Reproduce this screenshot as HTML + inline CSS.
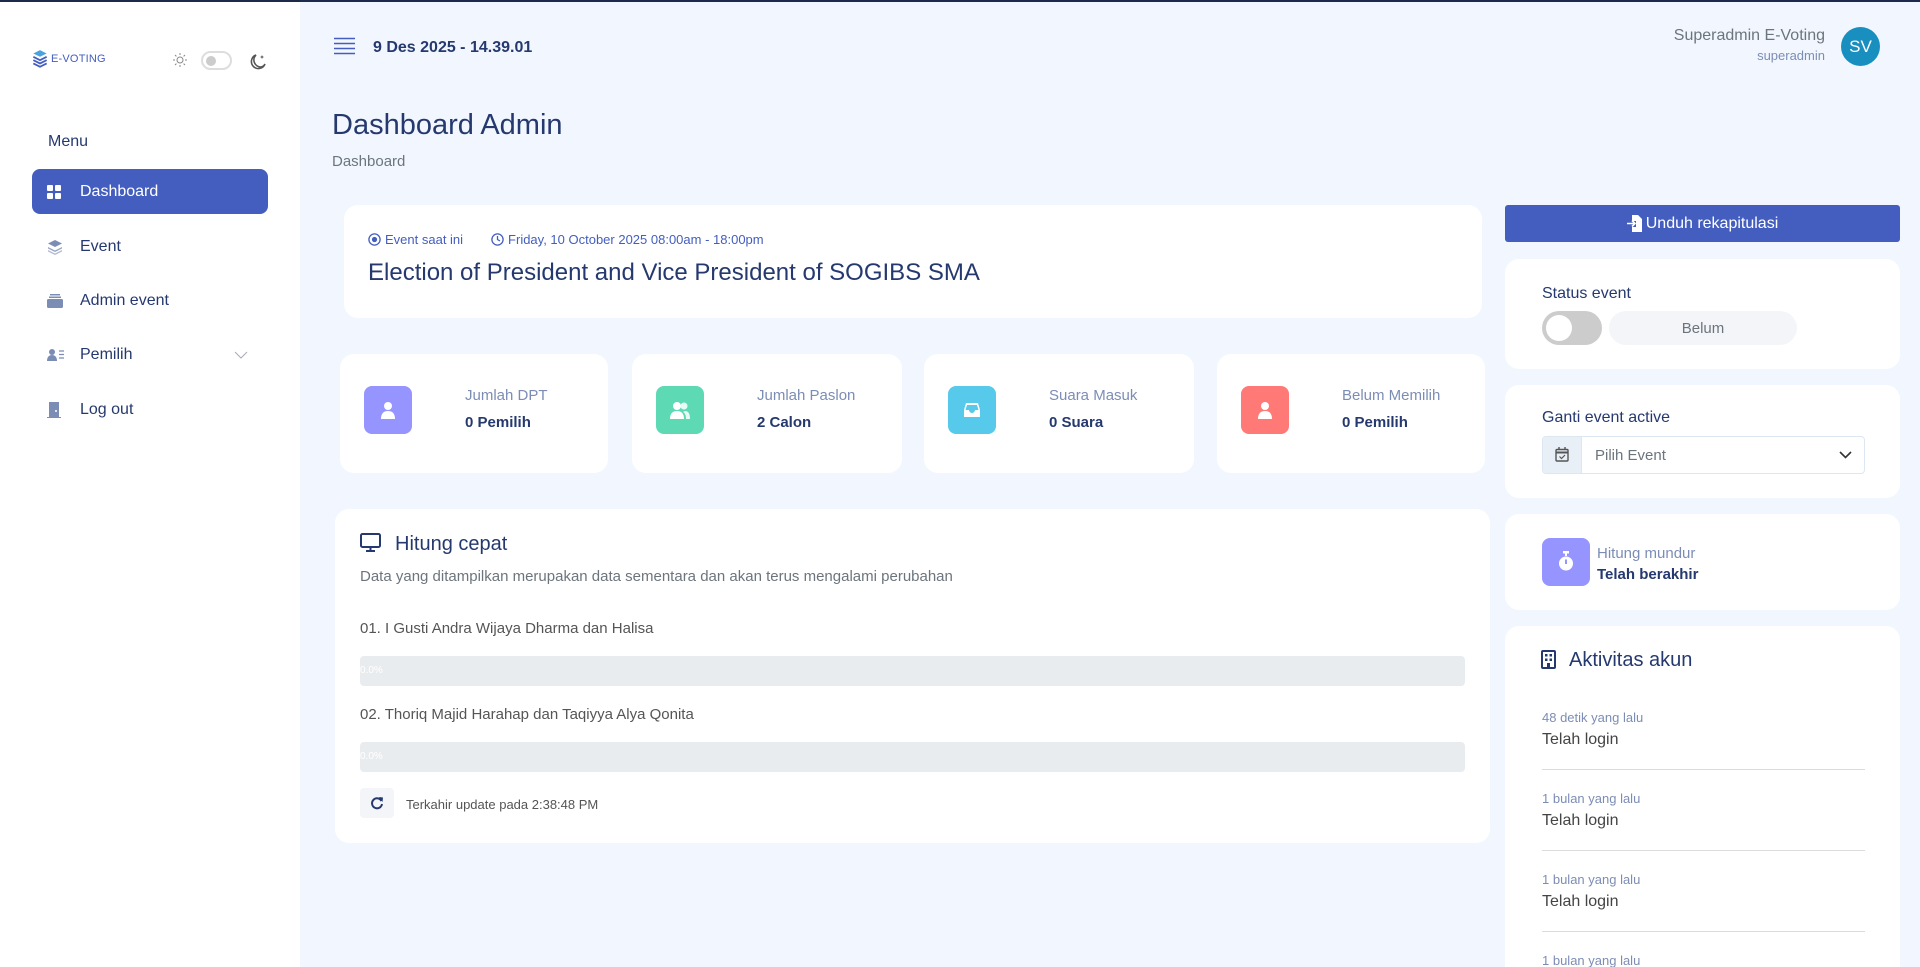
<!DOCTYPE html>
<html style="overflow:hidden;height:967px"><head><meta charset="utf-8">
<style>
*{box-sizing:border-box;margin:0;padding:0}
body{width:1920px;height:967px;overflow:hidden;background:#f2f7ff;font-family:"Liberation Sans",sans-serif;color:#25396f;position:relative}
.top{position:absolute;left:0;top:0;width:1920px;height:2px;background:#1e2a4a}
.side{position:absolute;left:0;top:2px;width:300px;height:965px;background:#fff}
.a{position:absolute}
.card{position:absolute;background:#fff;border-radius:14px}
.nav{position:absolute;left:32px;width:236px;height:45px;border-radius:8px;display:flex;align-items:center;padding-left:48px;font-size:16px;color:#25396f}
.nav svg{position:absolute;left:15px}
.stat .ic{position:absolute;left:24px;top:32px;width:48px;height:48px;border-radius:8px;display:flex;align-items:center;justify-content:center}
.stat .l{position:absolute;left:125px;top:33px;font-size:15px;color:#7c8db5}
.stat .v{position:absolute;left:125px;top:60px;font-size:15px;font-weight:bold;color:#25396f}
.bar{position:absolute;left:360px;width:1105px;height:30px;background:#e9ecef;border-radius:4px;font-size:10px;color:#fff;line-height:30px}
.act{position:absolute;left:1542px;width:323px}
.act .t{font-size:13px;color:#7c8db5}
.act .s{font-size:16px;color:#444;margin-top:6px}
.hr{position:absolute;left:1542px;width:323px;height:1px;background:#dcdcdc}
</style></head><body>
<div class="top"></div>
<div class="side">
 <div class="a" style="left:32px;top:47px;display:flex;align-items:center;gap:3px">
  <svg width="16" height="20" viewBox="0 0 14 18"><path d="M7 1L13 4 7 7 1 4Z" fill="#4aa3df"/><path d="M1 7l6 3 6-3M1 10l6 3 6-3M1 13l6 3 6-3" stroke="#435ebe" stroke-width="1.6" fill="none"/></svg>
  <span style="font-size:11px;color:#435ebe;letter-spacing:.2px">E-VOTING</span>
 </div>
 <svg class="a" style="left:172px;top:50px" width="16" height="16" viewBox="0 0 16 16"><circle cx="8" cy="8" r="3" fill="none" stroke="#888"/><path d="M8 1v2M8 13v2M1 8h2M13 8h2M3 3l1.4 1.4M11.6 11.6L13 13M3 13l1.4-1.4M11.6 4.4L13 3" stroke="#888"/></svg>
 <div class="a" style="left:201px;top:49px;width:31px;height:19px;border:2px solid #ddd;border-radius:10px"><div style="position:absolute;left:3px;top:2.5px;width:10px;height:10px;border-radius:5px;background:#ccc"></div></div>
 <svg class="a" style="left:249px;top:51px" width="18" height="18" viewBox="0 0 18 18"><path d="M12 14A7 7 0 0 1 7 2a7 7 0 1 0 9 9 6 6 0 0 1-4 3z" fill="none" stroke="#555" stroke-width="1.6"/><path d="M13 2l.6 1.4L15 4l-1.4.6L13 6l-.6-1.4L11 4l1.4-.6z" fill="#555"/></svg>
 <div class="a" style="left:48px;top:131px;font-size:16px">Menu</div>
 <div class="nav" style="top:167px;background:#435ebe;color:#fff"><svg width="14" height="14" viewBox="0 0 14 14" fill="#fff"><rect width="6" height="6" rx="1"/><rect x="8" width="6" height="6" rx="1"/><rect y="8" width="6" height="6" rx="1"/><rect x="8" y="8" width="6" height="6" rx="1"/></svg>Dashboard</div>
 <div class="nav" style="top:222px"><svg width="16" height="16" viewBox="0 0 16 16" fill="#7c8db5"><path d="M8 1l7 3.5-7 3.5-7-3.5z"/><path d="M1 8l7 3.5L15 8v1.5L8 13 1 9.5z" opacity=".8"/><path d="M1 11l7 3.5 7-3.5v1.5L8 16 1 12.5z" opacity=".6"/></svg>Event</div>
 <div class="nav" style="top:276px"><svg width="16" height="14" viewBox="0 0 16 14" fill="#7c8db5"><rect x="3" y="0" width="10" height="1.5"/><rect x="2" y="2.5" width="12" height="1.5"/><rect x="0" y="5" width="16" height="9" rx="1.5"/></svg>Admin event</div>
 <div class="nav" style="top:330px"><svg width="17" height="14" viewBox="0 0 17 14" fill="#7c8db5"><circle cx="5" cy="4" r="3"/><path d="M0 13c0-4 2-6 5-6s5 2 5 6z"/><path d="M12 3h5M12 6.5h5M12 10h5" stroke="#7c8db5" stroke-width="1.2"/></svg>Pemilih<svg style="left:202px" width="14" height="8" viewBox="0 0 14 8"><path d="M1 1l6 6 6-6" stroke="#aab" fill="none"/></svg></div>
 <div class="nav" style="top:385px"><svg width="14" height="16" viewBox="0 0 14 16" fill="#7c8db5"><rect x="2" y="0" width="10" height="16"/><rect x="0" y="15" width="14" height="1"/><circle cx="9" cy="9" r="1" fill="#fff"/></svg>Log out</div>
</div>

<svg class="a" style="left:334px;top:37px" width="21" height="18" viewBox="0 0 21 18"><path d="M0 1.5h21M0 6.5h21M0 11.5h21M0 16.5h21" stroke="#435ebe" stroke-width="1.6"/></svg>
<div class="a" style="left:373px;top:39px;font-size:16px;font-weight:bold;color:#25396f">9 Des 2025 - 14.39.01</div>
<div class="a" style="right:95px;top:27px;text-align:right"><div style="font-size:16px;color:#6c757d">Superadmin E-Voting</div><div style="font-size:13px;color:#7c8db5;margin-top:3px">superadmin</div></div>
<div class="a" style="left:1841px;top:27px;width:39px;height:39px;border-radius:50%;background:#198fbf;color:#fff;font-size:17px;display:flex;align-items:center;justify-content:center">SV</div>

<div class="a" style="left:332px;top:109px;font-size:29px">Dashboard Admin</div>
<div class="a" style="left:332px;top:153px;font-size:15px;color:#6c757d">Dashboard</div>

<div class="card" style="left:344px;top:205px;width:1138px;height:113px">
 <div class="a" style="left:24px;top:27px;font-size:13px;color:#435ebe;display:flex;align-items:center;gap:4px"><svg width="13" height="13" viewBox="0 0 13 13"><circle cx="6.5" cy="6.5" r="5.6" fill="none" stroke="#435ebe" stroke-width="1.3"/><circle cx="6.5" cy="6.5" r="2.6" fill="#435ebe"/></svg>Event saat ini<span style="width:20px"></span><svg width="13" height="13" viewBox="0 0 13 13"><circle cx="6.5" cy="6.5" r="5.6" fill="none" stroke="#435ebe" stroke-width="1.3"/><path d="M6.5 3v3.5l2.5 1.5" stroke="#435ebe" stroke-width="1.3" fill="none"/></svg>Friday, 10 October 2025 08:00am - 18:00pm</div>
 <div class="a" style="left:24px;top:54px;font-size:24px;color:#25396f">Election of President and Vice President of SOGIBS SMA</div>
</div>

<div class="card stat" style="left:340px;top:354px;width:268px;height:119px"><div class="ic" style="background:#9694ff"><svg width="16" height="18" viewBox="0 0 16 18" fill="#fff"><circle cx="8" cy="5" r="4"/><path d="M1 18c0-6 3-8 7-8s7 2 7 8z"/></svg></div><div class="l">Jumlah DPT</div><div class="v">0 Pemilih</div></div>
<div class="card stat" style="left:632px;top:354px;width:270px;height:119px"><div class="ic" style="background:#5ddab4"><svg width="22" height="18" viewBox="0 0 22 18" fill="#fff"><circle cx="8" cy="5" r="4"/><path d="M1 18c0-6 3-8 7-8s7 2 7 8z"/><circle cx="15" cy="5" r="3.5" opacity=".85"/><path d="M16 10c3 0 5 2 5 8h-4c0-4-1-6-3-7z" opacity=".85"/></svg></div><div class="l">Jumlah Paslon</div><div class="v">2 Calon</div></div>
<div class="card stat" style="left:924px;top:354px;width:270px;height:119px"><div class="ic" style="background:#57caeb"><svg width="18" height="16" viewBox="0 0 18 16"><path d="M3 1h12l2 7v7H1V8z" fill="#fff"/><path d="M4 3h10l1.5 5H12a3 3 0 0 1-6 0H2.5z" fill="#57caeb"/></svg></div><div class="l">Suara Masuk</div><div class="v">0 Suara</div></div>
<div class="card stat" style="left:1217px;top:354px;width:268px;height:119px"><div class="ic" style="background:#ff7976"><svg width="16" height="18" viewBox="0 0 16 18" fill="#fff"><circle cx="8" cy="5" r="4"/><path d="M1 18c0-6 3-8 7-8s7 2 7 8z"/></svg></div><div class="l">Belum Memilih</div><div class="v">0 Pemilih</div></div>

<div class="card" style="left:335px;top:509px;width:1155px;height:334px"></div>
<svg class="a" style="left:360px;top:533px" width="21" height="19" viewBox="0 0 21 19"><rect x="1" y="1" width="19" height="13" rx="1.5" fill="none" stroke="#25396f" stroke-width="2"/><path d="M10.5 14v3M6 18h9" stroke="#25396f" stroke-width="2"/></svg>
<div class="a" style="left:395px;top:533px;font-size:20px">Hitung cepat</div>
<div class="a" style="left:360px;top:568px;font-size:15px;color:#6c757d">Data yang ditampilkan merupakan data sementara dan akan terus mengalami perubahan</div>
<div class="a" style="left:360px;top:620px;font-size:15px;color:#555">01. I Gusti Andra Wijaya Dharma dan Halisa</div>
<div class="bar" style="top:656px">0.0%</div>
<div class="a" style="left:360px;top:706px;font-size:15px;color:#555">02. Thoriq Majid Harahap dan Taqiyya Alya Qonita</div>
<div class="bar" style="top:742px">0.0%</div>
<div class="a" style="left:360px;top:788px;width:34px;height:30px;background:#f3f5f8;border-radius:4px"><svg style="position:absolute;left:10px;top:8px" width="14" height="14" viewBox="0 0 14 14"><path d="M11.5 5A5 5 0 1 0 12 8" fill="none" stroke="#25396f" stroke-width="2"/><path d="M9 1l4 .5-.5 4.5z" fill="#25396f"/></svg></div>
<div class="a" style="left:406px;top:797px;font-size:13px;color:#555">Terkahir update pada 2:38:48 PM</div>

<div class="a" style="left:1505px;top:205px;width:395px;height:37px;background:#435ebe;border-radius:3px;color:#fff;font-size:16px;display:flex;align-items:center;justify-content:center;gap:3px"><svg width="16" height="17" viewBox="0 0 16 17"><path d="M5 0h6l4 4v13H5v-5h4V6H5z" fill="#fff"/><path d="M0 8.5h8M5 5.5l3 3-3 3" stroke="#fff" stroke-width="1.6" fill="none"/></svg>Unduh rekapitulasi</div>

<div class="card" style="left:1505px;top:259px;width:395px;height:110px">
 <div class="a" style="left:37px;top:26px;font-size:16px">Status event</div>
 <div class="a" style="left:37px;top:52px;width:60px;height:34px;background:#ccc;border-radius:17px"><div style="position:absolute;left:4px;top:4px;width:26px;height:26px;border-radius:13px;background:#fff"></div></div>
 <div class="a" style="left:104px;top:52px;width:188px;height:34px;background:#f3f5f8;border-radius:17px;font-size:15px;color:#6c757d;display:flex;align-items:center;justify-content:center">Belum</div>
</div>

<div class="card" style="left:1505px;top:385px;width:395px;height:113px">
 <div class="a" style="left:37px;top:24px;font-size:16px">Ganti event active</div>
 <div class="a" style="left:37px;top:51px;width:323px;height:38px;border:1px solid #dce7f1;border-radius:4px;overflow:hidden">
  <div style="position:absolute;left:0;top:0;width:39px;height:36px;background:#e9eff6;border-right:1px solid #dce7f1"><svg style="position:absolute;left:12px;top:10px" width="14" height="15" viewBox="0 0 14 15"><rect x="1" y="2.5" width="12" height="11.5" rx="1" fill="none" stroke="#555" stroke-width="1.4"/><path d="M1 5.5h12" stroke="#555" stroke-width="2"/><path d="M4 0v3M10 0v3" stroke="#555" stroke-width="1.4"/><path d="M4.5 9.5l2 2 3.5-3.5" stroke="#555" stroke-width="1.2" fill="none"/></svg></div>
  <div style="position:absolute;left:52px;top:10px;font-size:15px;color:#6c757d">Pilih Event</div>
  <svg style="position:absolute;right:12px;top:14px" width="13" height="8" viewBox="0 0 13 8"><path d="M1 1l5.5 5.5L12 1" stroke="#333" stroke-width="1.6" fill="none"/></svg>
 </div>
</div>

<div class="card" style="left:1505px;top:514px;width:395px;height:96px">
 <div class="a" style="left:37px;top:24px;width:48px;height:48px;border-radius:8px;background:#9694ff"><svg style="position:absolute;left:15px;top:13px" width="18" height="21" viewBox="0 0 18 21"><rect x="6" y="0" width="6" height="2.5" fill="#fff"/><rect x="8" y="2" width="2" height="3" fill="#fff"/><circle cx="9" cy="12.5" r="7" fill="#fff"/><path d="M9 8.5v4.5" stroke="#9694ff" stroke-width="2"/></svg></div>
 <div class="a" style="left:92px;top:31px;font-size:15px;color:#7c8db5">Hitung mundur</div>
 <div class="a" style="left:92px;top:52px;font-size:15px;font-weight:bold;color:#25396f">Telah berakhir</div>
</div>

<div class="card" style="left:1505px;top:626px;width:395px;height:341px;border-radius:14px 14px 0 0"></div>
<svg class="a" style="left:1541px;top:650px" width="15" height="19" viewBox="0 0 15 19"><rect x="1" y="1" width="13" height="17" rx="1" fill="none" stroke="#25396f" stroke-width="2"/><rect x="4" y="4" width="2.5" height="2.5" fill="#25396f"/><rect x="8.5" y="4" width="2.5" height="2.5" fill="#25396f"/><rect x="4" y="8.5" width="2.5" height="2.5" fill="#25396f"/><rect x="8.5" y="8.5" width="2.5" height="2.5" fill="#25396f"/><rect x="6" y="13" width="3" height="5" fill="#25396f"/></svg>
<div class="a" style="left:1569px;top:649px;font-size:20px">Aktivitas akun</div>
<div class="act" style="top:710px"><div class="t">48 detik yang lalu</div><div class="s">Telah login</div></div>
<div class="hr" style="top:769px"></div>
<div class="act" style="top:791px"><div class="t">1 bulan yang lalu</div><div class="s">Telah login</div></div>
<div class="hr" style="top:850px"></div>
<div class="act" style="top:872px"><div class="t">1 bulan yang lalu</div><div class="s">Telah login</div></div>
<div class="hr" style="top:931px"></div>
<div class="act" style="top:953px;height:14px;overflow:hidden"><div class="t">1 bulan yang lalu</div></div>
</body></html>
